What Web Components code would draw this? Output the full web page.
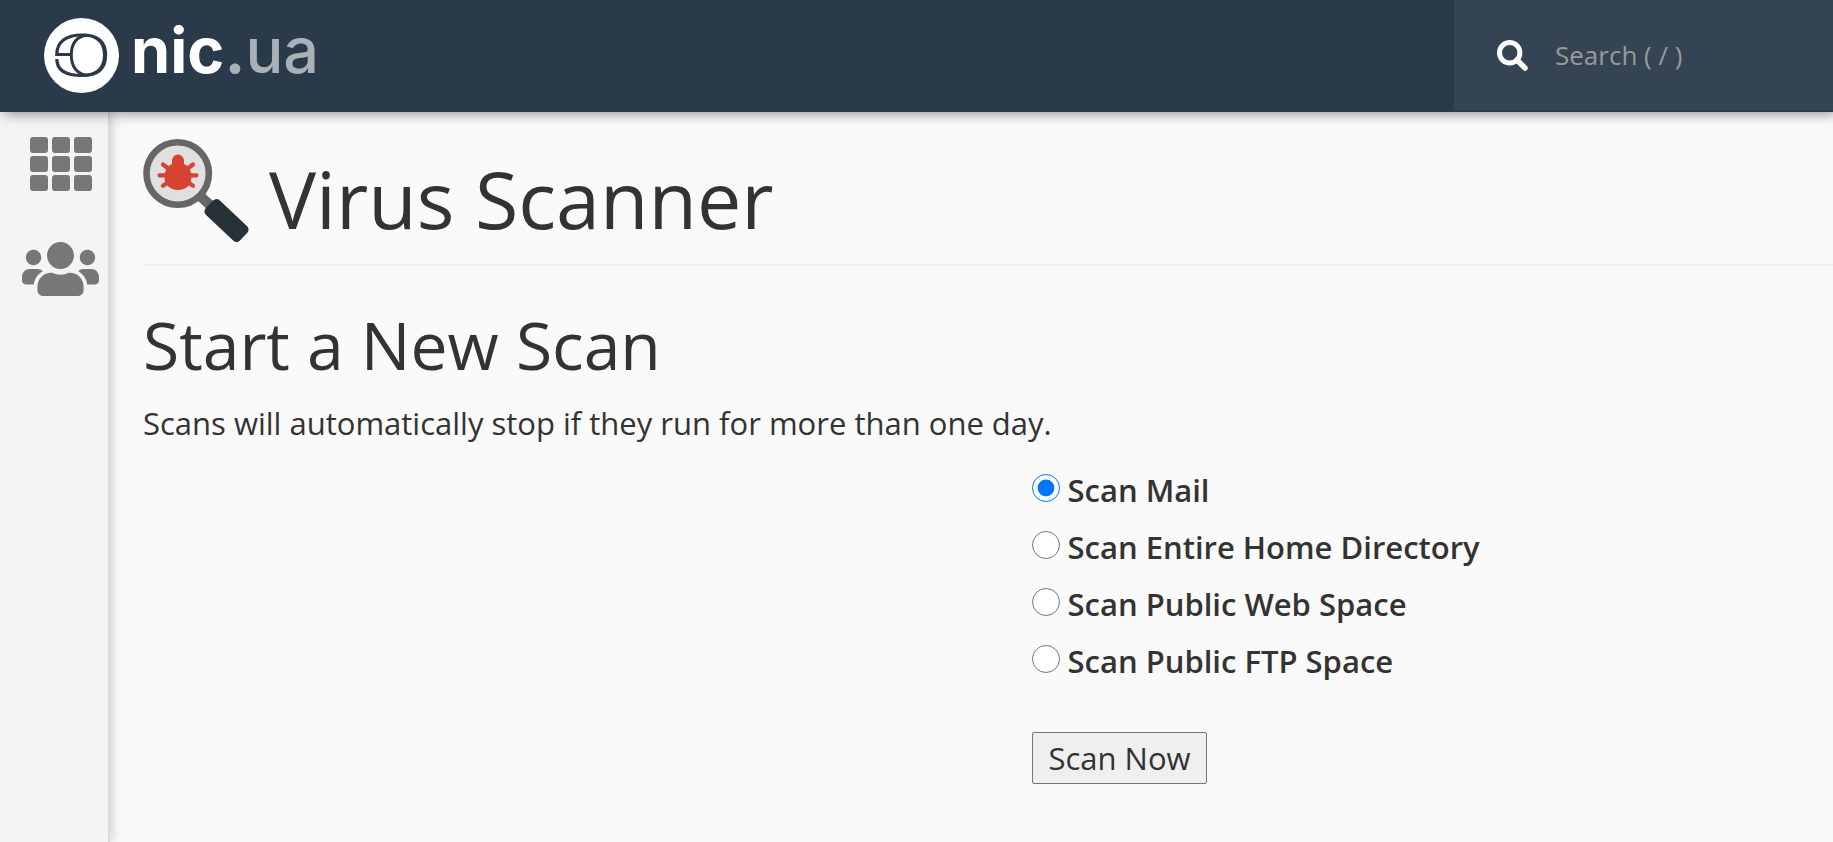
<!DOCTYPE html>
<html lang="en">
<head>
<meta charset="utf-8">
<title>Virus Scanner</title>
<style>
    body {
        margin: 0;
        background: #fafafa;
        color: #333;
        font-family: "Open Sans", "Noto Sans", sans-serif;
        font-size: 31px;
    }
</style>
</head>
<body>
<app-shell>
    <top-bar slot="header"></top-bar>
    <side-nav slot="nav"></side-nav>
    <page-title>
        <bug-icon slot="icon"></bug-icon>
        Virus Scanner
    </page-title>
    <scan-form>
        <span slot="title">Start a New Scan</span>
        <span slot="description">Scans will automatically stop if they run for more than one day.</span>
    </scan-form>
</app-shell>

<script>
// attaches an open shadow root and fills it from a template
class BaseElement extends HTMLElement {
    constructor() {
        super();
        this.attachShadow({ mode: 'open' });

        const template = document.createElement('template');
        template.innerHTML = this.constructor.markup;
        this.shadowRoot.appendChild(template.content.cloneNode(true));
    }
}

class AppShell extends BaseElement {
    static markup = `
        <style>
            :host {
                display: grid;
                grid-template-columns: auto minmax(0, 1fr);
                grid-template-rows: auto 1fr;
                min-height: 100vh;
            }

            header {
                grid-column: 1 / -1;
                position: relative;
                z-index: 2;
            }

            main {
                padding: 27px 0 27px 33px;
            }
        </style>
        <header><slot name="header"></slot></header>
        <slot name="nav"></slot>
        <main><slot></slot></main>
    `;
}

class TopBar extends BaseElement {
    static markup = `
        <style>
            :host {
                display: flex;
                justify-content: space-between;
                height: 110px;
                padding-bottom: 2px;
                background: #2a3a4a;
                box-shadow: 4px 2px 12px rgba(0, 0, 0, 0.42);
            }
        </style>
        <brand-logo></brand-logo>
        <search-box></search-box>
    `;
}

class BrandLogo extends BaseElement {
    static markup = `
        <style>
            :host {
                display: flex;
                padding-left: 44px;
            }

            a {
                display: flex;
                align-items: center;
                gap: 12px;
                color: #fff;
                font: 700 63px/76px Inter, sans-serif;
                text-decoration: none;
            }

            .name {
                padding-bottom: 10px;
            }

            .name span {
                color: #a9b0b7;
            }

            .name .zone {
                font-weight: 500;
            }
        </style>
        <a href="#">
            <svg width="75" height="75" viewBox="0 0 75 75" aria-hidden="true">
                <circle cx="37.500" cy="37.500" r="37.500" fill="#fff"/>
                <g fill="none" stroke="#2a3a4a">
                    <path stroke-width="3.200" d="M27.500 36.500H12.800C12.800 24 22 17 38 17C54 17 61.600 23 61.600 37C61.600 51 54 57.500 38 57.500C22 57.500 12.800 52 12.800 41"/>
                    <path stroke-width="3" d="M42 17C32 19 27.300 26 27.300 37C27.300 48 32 55 42 57.500"/>
                    <path stroke-width="2" d="M35 18C49 16 60 22 60 37C60 52 49 58.500 35 56.500"/>
                </g>
            </svg>
            <span class="name">nic<span>.</span><span class="zone">ua</span></span>
        </a>
    `;
}

class SearchBox extends BaseElement {
    static markup = `
        <style>
            :host {
                display: flex;
                width: 379px;
                background: #354453;
            }

            label {
                display: flex;
                align-items: center;
                gap: 27px;
                flex: 1;
                padding-left: 43px;
            }

            input {
                flex: 1;
                min-width: 0;
                padding: 0;
                border: 0;
                outline: 0;
                background: none;
                color: #fff;
                font: inherit;
                font-size: 26px;
            }

            input::placeholder {
                color: #999;
            }
        </style>
        <label>
            <svg width="31" height="31" viewBox="0 0 31 31" fill="none" stroke="#fff" aria-hidden="true">
                <circle cx="12.700" cy="12.700" r="10.200" stroke-width="5"/>
                <path d="M20 20l8 8" stroke-width="5.500" stroke-linecap="round"/>
            </svg>
            <input type="text" placeholder="Search ( / )" aria-label="Search">
        </label>
    `;
}

class SideNav extends BaseElement {
    static markup = `
        <style>
            :host {
                display: block;
                position: relative;
                z-index: 1;
                background: #f4f4f4;
                border-right: 2px solid #dadada;
                box-shadow: 2px 0 10px rgba(0, 0, 0, 0.18);
            }

            nav {
                display: flex;
                flex-direction: column;
                align-items: center;
                gap: 51px;
                padding: 25px 9px 25px 22px;
            }

            a {
                display: flex;
                color: #777;
            }

            svg {
                fill: currentColor;
            }
        </style>
        <nav>
            <a href="#" aria-label="Tools">
                <svg width="62" height="54" viewBox="0 0 62 54">
                    <rect width="18" height="16" rx="3"/>
                    <rect x="22" width="18" height="16" rx="3"/>
                    <rect x="44" width="18" height="16" rx="3"/>
                    <rect y="19" width="18" height="16" rx="3"/>
                    <rect x="22" y="19" width="18" height="16" rx="3"/>
                    <rect x="44" y="19" width="18" height="16" rx="3"/>
                    <rect y="38" width="18" height="16" rx="3"/>
                    <rect x="22" y="38" width="18" height="16" rx="3"/>
                    <rect x="44" y="38" width="18" height="16" rx="3"/>
                </svg>
            </a>
            <a href="#" aria-label="User Manager">
                <svg width="77" height="54" viewBox="0 32 640 448">
                    <path d="M96 224c35.300 0 64-28.700 64-64s-28.700-64-64-64-64 28.700-64 64 28.700 64 64 64zm448 0c35.300 0 64-28.700 64-64s-28.700-64-64-64-64 28.700-64 64 28.700 64 64 64zm32 32h-64c-17.600 0-33.500 7.100-45.100 18.600 40.300 22.100 68.900 62 75.100 109.400h66c17.700 0 32-14.300 32-32v-32c0-35.300-28.700-64-64-64zm-256 0c61.900 0 112-50.100 112-112S381.900 32 320 32 208 82.100 208 144s50.100 112 112 112zm76.800 32h-8.300c-20.800 10-43.900 16-68.500 16s-47.600-6-68.500-16h-8.300C179.600 288 128 339.600 128 403.200V432c0 26.500 21.500 48 48 48h288c26.500 0 48-21.500 48-48v-28.800c0-63.600-51.600-115.200-115.200-115.200zm-223.700-13.400C161.500 263.100 145.600 256 128 256H64c-35.300 0-64 28.700-64 64v32c0 17.700 14.300 32 32 32h65.900c6.300-47.400 34.900-87.300 75.200-109.400z"/>
                </svg>
            </a>
        </nav>
    `;
}

class BugIcon extends BaseElement {
    static markup = `
        <style>
            :host {
                display: flex;
            }
        </style>
        <svg width="106" height="104" viewBox="0 0 106 104" aria-hidden="true">
            <path d="M56 56l12 11" stroke="#666" stroke-width="10"/>
            <circle cx="34.700" cy="34.500" r="31.200" fill="#e0e0e0" stroke="#666" stroke-width="6.600"/>
            <rect x="60" y="71.500" width="47" height="20" rx="4.500" fill="#263238" transform="rotate(43.500 83.500 81.500)"/>
            <g fill="#d64330">
                <path d="M29 22a6 6.500 0 0 1 12 0v5h-12z"/>
                <path d="M35 24c9 0 13.500 6 13.500 14c0 8-5.500 13-13.500 13s-13.500-5-13.500-13c0-8 4.500-14 13.500-14z"/>
            </g>
            <path d="M16.500 36.300H53.500M20 25.500l8 6M50 25.500l-8 6M20 46.700l8-5.500M50 46.700l-8-5.500" fill="none" stroke="#d64330" stroke-width="4.200" stroke-linecap="round"/>
        </svg>
    `;
}

class PageTitle extends BaseElement {
    static markup = `
        <style>
            :host {
                display: block;
                padding-bottom: 21px;
                border-bottom: 2px solid #eee;
            }

            h1 {
                display: flex;
                align-items: flex-end;
                gap: 20px;
                margin: 0;
                font-size: 79px;
                font-weight: 400;
                line-height: 88px;
            }
        </style>
        <h1>
            <slot name="icon"></slot>
            <span><slot></slot></span>
        </h1>
    `;
}

class ScanForm extends BaseElement {
    static markup = `
        <style>
            :host {
                display: block;
                padding-top: 42px;
            }

            h2 {
                margin: 0;
                font-size: 66px;
                font-weight: 400;
                line-height: 72px;
            }

            p {
                margin: 20px 0 16px;
                line-height: 46px;
            }

            form {
                display: grid;
                grid-template-columns: 10fr 9fr;
            }

            .fields {
                grid-column: 2;
            }

            .option {
                display: flex;
                align-items: center;
                gap: 7px;
                line-height: 57px;
            }

            .option input {
                width: 28px;
                height: 28px;
                margin: 0 0 6px;
            }

            .option label {
                font-weight: 600;
            }

            button {
                margin-top: 42px;
                padding: 0 15px;
                border: 1px solid #767676;
                border-radius: 2px;
                background: #efefef;
                color: #333;
                font: inherit;
                line-height: 50px;
            }
        </style>
        <h2><slot name="title"></slot></h2>
        <p><slot name="description"></slot></p>
        <form>
            <div class="fields">
                <div class="option">
                    <input type="radio" name="scan" id="mail" checked>
                    <label for="mail">Scan Mail</label>
                </div>
                <div class="option">
                    <input type="radio" name="scan" id="home">
                    <label for="home">Scan Entire Home Directory</label>
                </div>
                <div class="option">
                    <input type="radio" name="scan" id="web">
                    <label for="web">Scan Public Web Space</label>
                </div>
                <div class="option">
                    <input type="radio" name="scan" id="ftp">
                    <label for="ftp">Scan Public FTP Space</label>
                </div>
                <button type="button">Scan Now</button>
            </div>
        </form>
    `;
}

customElements.define('app-shell', AppShell);
customElements.define('top-bar', TopBar);
customElements.define('brand-logo', BrandLogo);
customElements.define('search-box', SearchBox);
customElements.define('side-nav', SideNav);
customElements.define('bug-icon', BugIcon);
customElements.define('page-title', PageTitle);
customElements.define('scan-form', ScanForm);
</script>
</body>
</html>
